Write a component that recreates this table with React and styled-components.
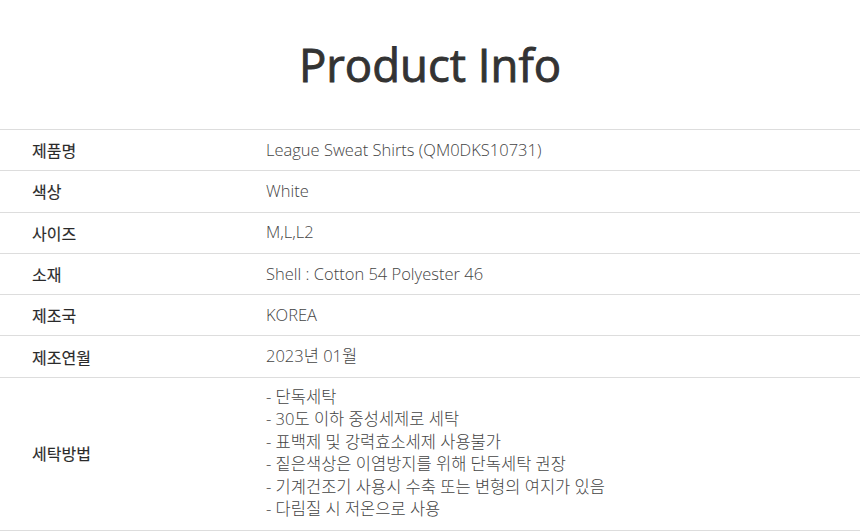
import styled, { createGlobalStyle } from 'styled-components'

const GlobalStyle = createGlobalStyle`
  html, body {
    margin: 0;
    padding: 0;
    background: #FFFFFF;
  }
  body {
    font-family: "Noto Sans", "Noto Sans CJK KR", sans-serif;
  }
`

const Page = styled.div`
  width: 860px;
  background: #FFFFFF;
`

const Title = styled.h1`
  margin: 0;
  height: 129px;
  display: flex;
  align-items: center;
  justify-content: center;
  font-family: "Open Sans", "Noto Sans CJK KR", sans-serif;
  font-size: 45.5px;
  font-weight: 400;
  color: #333333;
  -webkit-text-stroke: 0.9px #333333;
  padding-bottom: 2px;
  box-sizing: border-box;
`

const Table = styled.div`
  border-top: 1px solid #DDDDDD;
`

const Row = styled.div`
  display: grid;
  grid-template-columns: 266px 1fr;
  align-items: center;
  min-height: 41.3px;
  border-bottom: 1px solid #DDDDDD;
  padding: ${props => (props.tall ? '8px 0 9px' : '0')};
  box-sizing: border-box;
`

const Label = styled.div`
  padding-left: 32px;
  font-family: "Noto Sans CJK KR", sans-serif;
  font-size: 16px;
  font-weight: 400;
  color: #2A2A2A;
  -webkit-text-stroke: 0.15px #2A2A2A;
`

const Value = styled.div`
  font-family: "Open Sans", "Noto Sans CJK KR", sans-serif;
  font-size: 16.5px;
  font-weight: 300;
  color: #444444;
  line-height: 22.5px;
`

const LineList = styled.ul`
  list-style: none;
  margin: 0;
  padding: 0;
`

const specs = [
  ['제품명', 'League Sweat Shirts (QM0DKS10731)'],
  ['색상', 'White'],
  ['사이즈', 'M,L,L2'],
  ['소재', 'Shell : Cotton 54 Polyester 46'],
  ['제조국', 'KOREA'],
  ['제조연월', '2023년 01월'],
]

const washing = [
  '- 단독세탁',
  '- 30도 이하 중성세제로 세탁',
  '- 표백제 및 강력효소세제 사용불가',
  '- 짙은색상은 이염방지를 위해 단독세탁 권장',
  '- 기계건조기 사용시 수축 또는 변형의 여지가 있음',
  '- 다림질 시 저온으로 사용',
]

const App = () => {
  return (
    <Page>
      <GlobalStyle />
      <Title>Product Info</Title>
      <Table>
        {specs.map(([label, value]) => (
          <Row key={label}>
            <Label>{label}</Label>
            <Value>{value}</Value>
          </Row>
        ))}
        <Row tall>
          <Label>세탁방법</Label>
          <Value>
            <LineList>
              {washing.map(line => (
                <li key={line}>{line}</li>
              ))}
            </LineList>
          </Value>
        </Row>
      </Table>
    </Page>
  )
}

export default App
